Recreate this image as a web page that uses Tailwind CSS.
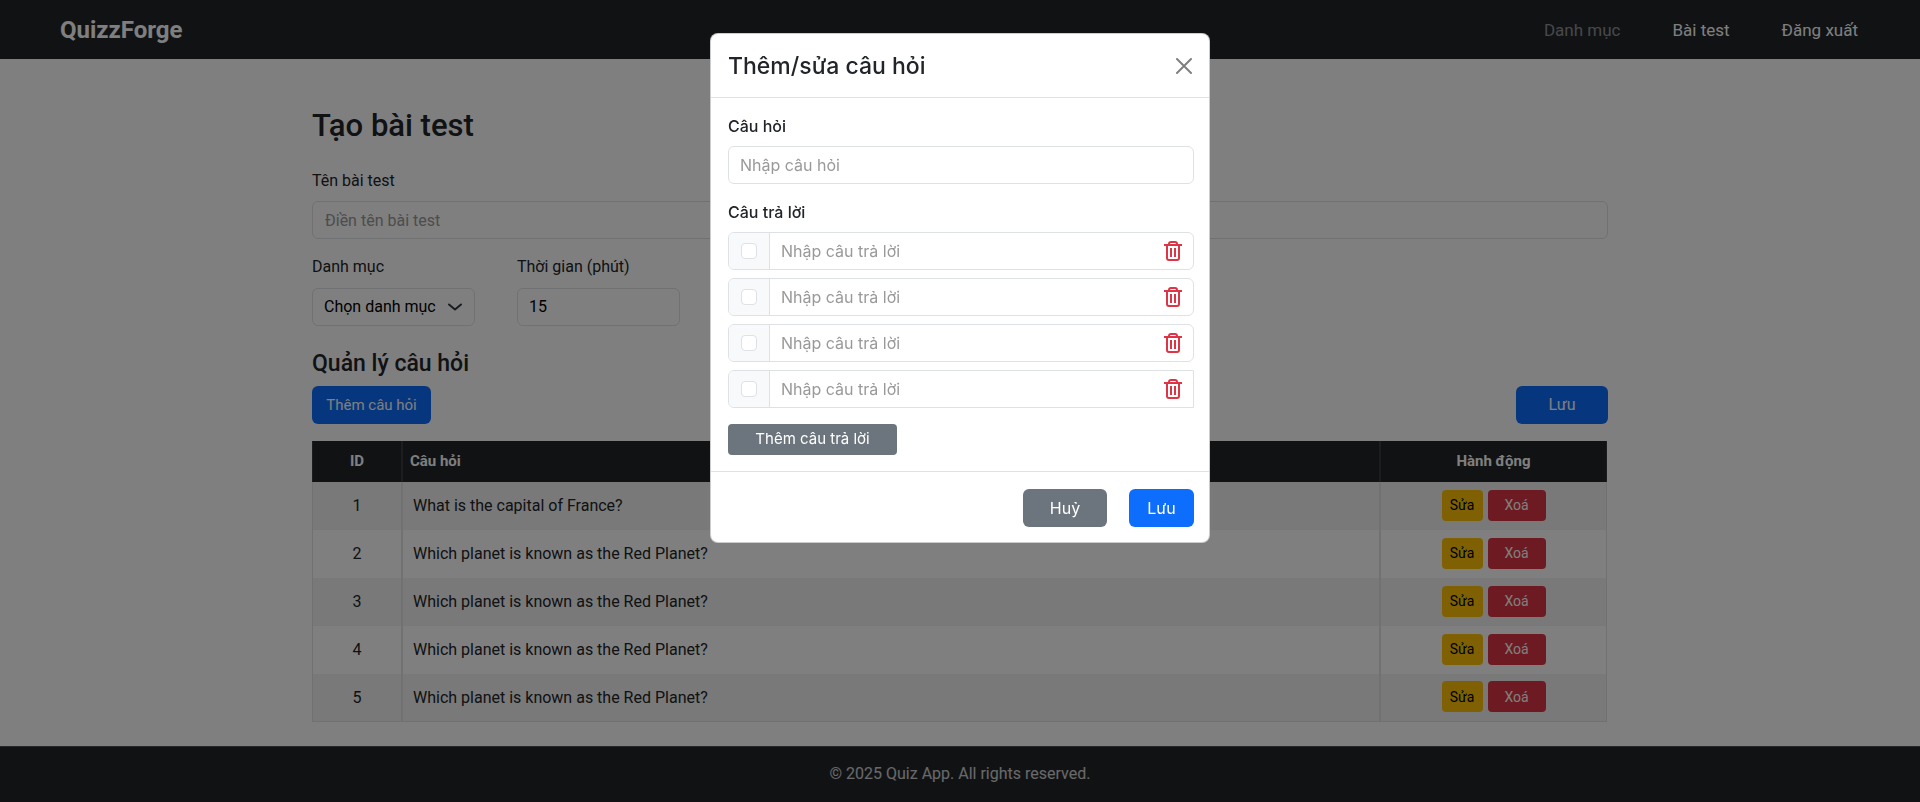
<!DOCTYPE html>
<html lang="vi">
<head>
<meta charset="utf-8">
<meta name="viewport" content="width=device-width, initial-scale=1">
<title>QuizzForge</title>
<script src="https://cdn.jsdelivr.net/npm/@tailwindcss/browser@4"></script>
</head>
<body class="min-h-screen flex flex-col bg-white font-['Roboto',sans-serif] text-base text-[#212529]">
<header class="flex h-[59px] items-center justify-between bg-[#212529] px-15 text-white">
  <a href="#" class="text-2xl font-bold">QuizzForge</a>
  <nav class="flex gap-[52px] pr-[2px] text-[17px] leading-6">
    <a href="#" class="text-white/50">Danh mục</a>
    <a href="#">Bài test</a>
    <a href="#">Đăng xuất</a>
  </nav>
</header>

<main class="mx-auto w-full max-w-[1320px] grow px-3 pt-12 pb-6">
  <h1 class="mb-6 text-[31px] leading-[38px] font-medium">Tạo bài test</h1>
  <label for="test-name" class="mb-2 block leading-6">Tên bài test</label>
  <input id="test-name" type="text" placeholder="Điền tên bài test" class="block h-[38px] w-full rounded-md border border-[#dee2e6] px-3 placeholder:text-[#999]">
  <div class="mt-4 flex gap-[42px]">
    <div class="w-[163px]">
      <label for="category" class="mb-[9px] block leading-6">Danh mục</label>
      <div class="relative">
        <select id="category" class="block h-[38px] w-full appearance-none rounded-md border border-[#dee2e6] bg-white pr-8 pl-[11px] text-black"><option>Chọn danh mục</option></select>
        <svg class="pointer-events-none absolute top-[11px] right-3 size-4" viewBox="0 0 16 16" fill="none" stroke="#343a40" stroke-width="2" stroke-linecap="round" stroke-linejoin="round"><path d="m2 5.5 6 5 6-5"/></svg>
      </div>
    </div>
    <div class="w-[163px]">
      <label for="duration" class="mb-[9px] block leading-6">Thời gian (phút)</label>
      <input id="duration" type="text" inputmode="numeric" value="15" class="block h-[38px] w-full rounded-md border border-[#dee2e6] px-[11px] pb-[2px] text-black">
    </div>
  </div>
  <h2 class="mt-6 mb-2 text-[23px] leading-7 font-medium">Quản lý câu hỏi</h2>
  <div class="mb-[17px] flex justify-between">
    <button type="button" class="h-[38px] w-[119px] rounded-md bg-[#0d6efd] text-[15px] text-white">Thêm câu hỏi</button>
    <button type="button" class="h-[38px] w-[92px] rounded-md bg-[#0d6efd] text-white">Lưu</button>
  </div>
  <table class="w-[calc(100%-1px)] table-fixed border-separate border-spacing-0">
    <thead>
      <tr class="h-[41px] bg-[#212529] text-[15px] text-white">
        <th class="w-[90px] border-x border-[#373b3e] font-bold">ID</th>
        <th class="border-x border-[#373b3e] px-[7px] text-left font-bold">Câu hỏi</th>
        <th class="w-[227px] border-x border-[#373b3e] font-bold">Hành động</th>
      </tr>
    </thead>
    <tbody id="rows"></tbody>
  </table>
</main>

<footer class="flex h-14 items-center justify-center border-t border-[#4d5154] bg-[#212529] pb-[2px] text-white/80">© 2025 Quiz App. All rights reserved.</footer>

<div class="fixed inset-0 flex items-start justify-center bg-black/50 pt-[33px] font-['Inter',sans-serif]">
  <div role="dialog" aria-modal="true" aria-labelledby="dialog-title" class="w-[500px] rounded-lg border border-black/20 bg-white">
    <div class="flex h-16 items-center justify-between border-b border-[#dee2e6] px-[17px]">
      <h2 id="dialog-title" class="text-[23px] leading-8 font-medium">Thêm/sửa câu hỏi</h2>
      <button type="button" aria-label="Đóng" class="text-[#808080]"><svg class="size-4" viewBox="0 0 16 16" fill="none" stroke="currentColor" stroke-width="2" stroke-linecap="round"><path d="m1 1 14 14M15 1 1 15"/></svg></button>
    </div>
    <div class="pt-4 pr-[15px] pb-4 pl-[17px]">
      <label for="question" class="mb-2 block leading-6 font-medium">Câu hỏi</label>
      <input id="question" type="text" placeholder="Nhập câu hỏi" class="mb-4 block h-[38px] w-full rounded-md border border-[#dee2e6] px-[11px] placeholder:text-[#999]">
      <h3 class="mb-2 leading-6 font-medium">Câu trả lời</h3>
      <div id="answers" class="flex flex-col gap-2"></div>
      <button type="button" class="mt-4 block h-[31px] w-[169px] rounded-sm bg-[#6c757d] text-[15px] text-white">Thêm câu trả lời</button>
    </div>
    <div class="flex justify-end gap-[22px] border-t border-[#dee2e6] pt-[17px] pr-[15px] pb-[15px] text-white">
      <button type="button" class="h-[38px] w-[84px] rounded-md bg-[#6c757d]">Huỷ</button>
      <button type="button" class="h-[38px] w-[65px] rounded-md bg-[#0d6efd]">Lưu</button>
    </div>
  </div>
</div>

<script>
  const questions = ["What is the capital of France?", ...Array(4).fill("Which planet is known as the Red Planet?")];
  document.getElementById("rows").innerHTML = questions.map((q, i) => `
    <tr class="group h-12 odd:bg-[#f2f2f2]">
      <td class="border-x border-[#dee2e6] text-center group-last:border-b">${i + 1}</td>
      <td class="border-x border-[#dee2e6] px-[10px] group-last:border-b">${q}</td>
      <td class="border-x border-[#dee2e6] pb-[2px] group-last:border-b"><div class="flex justify-center gap-[5px] text-sm">
        <button type="button" class="h-[31px] w-[41px] rounded-sm bg-[#ffc107] text-black">Sửa</button>
        <button type="button" class="h-[31px] w-[58px] rounded-sm bg-[#dc3545] text-white">Xoá</button>
      </div></td>
    </tr>`).join("");
  document.getElementById("answers").innerHTML = [1, 2, 3, 4].map(n => `
    <div class="flex h-[38px] overflow-hidden rounded-md border border-[#dee2e6] last:rounded-r-none">
      <div class="flex w-[41px] items-center justify-center border-r border-[#dee2e6] bg-[#f8f9fa]">
        <input type="checkbox" aria-label="Đáp án đúng ${n}" class="size-4 appearance-none rounded border border-[#dee2e6] bg-white">
      </div>
      <input type="text" aria-label="Câu trả lời ${n}" placeholder="Nhập câu trả lời" class="min-w-0 grow px-[11px] placeholder:text-[#999]">
      <button type="button" aria-label="Xoá câu trả lời ${n}" class="mr-[11px] text-[#dc3545]"><svg class="h-5 w-[18px]" viewBox="0 0 18 20" fill="none" stroke="currentColor" stroke-width="2"><path d="M0 4h18M5 4V3q0-2 2-2h4q2 0 2 2v1M3 4v13q0 2 2 2h8q2 0 2-2V4M7 7v9M11 7v9"/></svg></button>
    </div>`).join("");
</script>
</body>
</html>
